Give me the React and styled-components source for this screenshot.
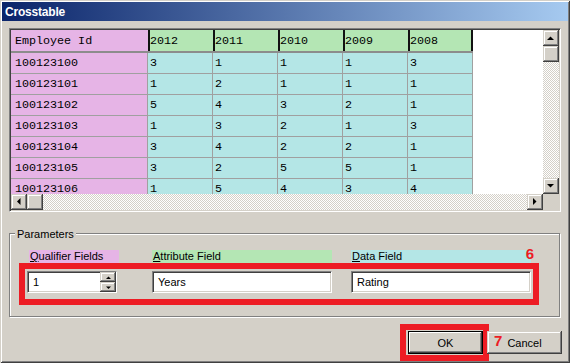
import React from 'react';
import styled, { createGlobalStyle } from 'styled-components';

const YEARS = ['2012', '2011', '2010', '2009', '2008'];

const ROWS = [
  { id: '100123100', values: [3, 1, 1, 1, 3] },
  { id: '100123101', values: [1, 2, 1, 1, 1] },
  { id: '100123102', values: [5, 4, 3, 2, 1] },
  { id: '100123103', values: [1, 3, 2, 1, 3] },
  { id: '100123104', values: [3, 4, 2, 2, 1] },
  { id: '100123105', values: [3, 2, 5, 5, 1] },
  { id: '100123106', values: [1, 5, 4, 3, 4] },
];

const PINK = '#e6b4e6';
const GREEN = '#b4e6b4';
const CYAN = '#b4e6e6';
const FACE = '#d4d0c8';
const RED = '#ed1c24';

const GlobalStyle = createGlobalStyle`
  html, body {
    margin: 0;
    padding: 0;
    background: ${FACE};
  }
  body {
    font-family: 'Liberation Sans', Arial, sans-serif;
    font-size: 11px;
    color: #000;
  }
`;

function Arrow({ dir, size = 16 }) {
  const shapes = {
    up: '4,10 11,10 7.5,6.5',
    down: '4,6 11,6 7.5,9.5',
    left: '9.5,4 9.5,11 6,7.5',
    right: '6,4 6,11 9.5,7.5',
  };
  return (
    <svg width={size} height={size} viewBox="0 0 16 16">
      <polygon points={shapes[dir]} fill="#000" />
    </svg>
  );
}

function SmallArrow({ dir }) {
  const pts = dir === 'up' ? '3,6 8,6 5.5,3.5' : '3,3.5 8,3.5 5.5,6';
  return (
    <svg width="11" height="9" viewBox="0 0 11 9">
      <polygon points={pts} fill="#000" />
    </svg>
  );
}

function App() {
  return (
    <>
      <GlobalStyle />
      <Window>
        <TitleBar>Crosstable</TitleBar>
        <Body>
          <GridFrame>
            <Viewport>
              <HeaderRow>
                <IdHeader>Employee Id</IdHeader>
                {YEARS.map(year => (
                  <YearHeader key={year}>{year}</YearHeader>
                ))}
              </HeaderRow>
              {ROWS.map(row => (
                <DataRow key={row.id}>
                  <IdCell>{row.id}</IdCell>
                  {row.values.map((v, idx) => (
                    <ValueCell key={idx}>{v}</ValueCell>
                  ))}
                </DataRow>
              ))}
            </Viewport>
            <VScroll>
              <ScrollButton>
                <Arrow dir="up" />
              </ScrollButton>
              <ScrollButton />
              <Track />
              <ScrollButton>
                <Arrow dir="down" />
              </ScrollButton>
            </VScroll>
            <HScroll>
              <ScrollButton>
                <Arrow dir="left" />
              </ScrollButton>
              <ScrollButton />
              <Track />
              <ScrollButton>
                <Arrow dir="right" />
              </ScrollButton>
            </HScroll>
            <Corner />
          </GridFrame>

          <Group>
            <Legend>Parameters</Legend>
            <LabelRow>
              <FieldLabel $bg={PINK} $w={90}>
                <u>Q</u>ualifier Fields
              </FieldLabel>
              <FieldLabel $bg={GREEN} $w={180}>
                <u>A</u>ttribute Field
              </FieldLabel>
              <FieldLabel $bg={CYAN} $w={180}>
                <u>D</u>ata Field
                <StepMark $top={-4} $right={-3}>6</StepMark>
              </FieldLabel>
            </LabelRow>
            <RedBox>
              <Field $w={90}>
                1
                <Spinner>
                  <SpinButton>
                    <SmallArrow dir="up" />
                  </SpinButton>
                  <SpinButton>
                    <SmallArrow dir="down" />
                  </SpinButton>
                </Spinner>
              </Field>
              <Field $w={180}>Years</Field>
              <Field $w={180}>Rating</Field>
            </RedBox>
          </Group>

          <ButtonRow>
            <OkWrap>
              <PushButton $default>OK</PushButton>
              <RedFrame />
            </OkWrap>
            <PushButton>
              <StepMark $top={2} $left={7}>7</StepMark>
              Cancel
            </PushButton>
          </ButtonRow>
        </Body>
      </Window>
    </>
  );
}

export default App;

const raised = `
  background: ${FACE};
  box-shadow: inset -1px -1px #404040, inset 1px 1px ${FACE},
    inset -2px -2px #808080, inset 2px 2px #fff;
`;

const Window = styled.div`
  width: 570px;
  height: 363px;
  box-sizing: border-box;
  padding: 2px;
  background: ${FACE};
  box-shadow: inset 1px 1px ${FACE}, inset -1px -1px #404040,
    inset 2px 2px #fff, inset -2px -2px #808080;
  display: flex;
  flex-direction: column;
`;

const TitleBar = styled.div`
  height: 19px;
  display: flex;
  align-items: center;
  padding-left: 3px;
  background: linear-gradient(to right, #0a246a, #a6caf0);
  color: #fff;
  font-weight: bold;
  font-size: 12px;
  letter-spacing: -0.2px;
`;

const Body = styled.div`
  display: flex;
  flex-direction: column;
  padding: 7px 6px 0 7px;
`;

const GridFrame = styled.div`
  width: 552px;
  height: 184px;
  box-sizing: border-box;
  border: 1px solid;
  border-color: #808080 #fff #fff #808080;
  box-shadow: inset 1px 1px #404040, inset -1px -1px ${FACE};
  padding: 1px;
  display: grid;
  grid-template-columns: 532px 16px;
  grid-template-rows: 164px 16px;
`;

const Viewport = styled.div`
  background: #fff;
  overflow: hidden;
  font-family: 'Liberation Mono', 'Courier New', monospace;
  font-size: 11.7px;
`;

const HeaderRow = styled.div`
  display: flex;
  width: 462px;
  height: 23px;
  box-sizing: border-box;
  border-bottom: 2px solid #8c8c8c;
`;

const IdHeader = styled.div`
  width: 137px;
  box-sizing: border-box;
  padding-left: 4px;
  display: flex;
  align-items: center;
  background: ${PINK};
`;

const YearHeader = styled.div`
  width: 65px;
  box-sizing: border-box;
  border-left: 2px solid #111;
  display: flex;
  align-items: center;
  background: ${GREEN};

  &:last-child {
    border-right: 2px solid #111;
  }
`;

const DataRow = styled.div`
  display: flex;
  width: 462px;
  height: 21px;
  box-sizing: border-box;
  border-bottom: 1px solid #a0a0a0;
`;

const IdCell = styled.div`
  width: 137px;
  box-sizing: border-box;
  padding-left: 4px;
  border-right: 1px solid #a0a0a0;
  display: flex;
  align-items: center;
  background: ${PINK};
`;

const ValueCell = styled.div`
  width: 65px;
  box-sizing: border-box;
  padding-left: 2px;
  border-right: 1px solid #a0a0a0;
  display: flex;
  align-items: center;
  background: ${CYAN};
`;

const VScroll = styled.div`
  display: flex;
  flex-direction: column;
`;

const HScroll = styled.div`
  display: flex;
`;

const ScrollButton = styled.div`
  width: 16px;
  height: 16px;
  flex: none;
  display: flex;
  ${raised}
`;

const Track = styled.div`
  flex: 1;
  background: repeating-conic-gradient(${FACE} 0 25%, #fff 0 50%) 0 0 / 2px 2px;
`;

const Corner = styled.div`
  background: ${FACE};
`;

const Group = styled.div`
  position: relative;
  width: 551px;
  height: 84px;
  box-sizing: border-box;
  margin-top: 21px;
  padding-top: 16px;
  border: 1px solid #808080;
  box-shadow: inset 1px 1px #fff, 1px 1px #fff;
`;

const Legend = styled.div`
  position: absolute;
  top: -7px;
  left: 5px;
  padding: 0 2px;
  line-height: 14px;
  background: ${FACE};
`;

const LabelRow = styled.div`
  display: flex;
  gap: 0;
  margin-left: 19px;

  & > :nth-child(2) {
    margin-left: 33px;
  }
  & > :nth-child(3) {
    margin-left: 19px;
  }
`;

const FieldLabel = styled.div`
  position: relative;
  width: ${p => p.$w}px;
  height: 13px;
  line-height: 13px;
  padding-left: 1px;
  box-sizing: border-box;
  background: ${p => p.$bg};
  white-space: nowrap;

  u {
    text-decoration-thickness: 1px;
    text-underline-offset: 1px;
  }
`;

const StepMark = styled.span`
  position: absolute;
  top: ${p => p.$top}px;
  ${p => (p.$right !== undefined ? `right: ${p.$right}px;` : '')}
  ${p => (p.$left !== undefined ? `left: ${p.$left}px;` : '')}
  color: ${RED};
  font-weight: bold;
  font-size: 15px;
  line-height: 15px;
`;

const RedBox = styled.div`
  width: 520px;
  height: 42px;
  box-sizing: border-box;
  margin-left: 9px;
  border: 6px solid ${RED};
  padding: 2px 0 0 2px;
  display: flex;
  align-items: flex-start;

  & > :nth-child(2) {
    margin-left: 35px;
  }
  & > :nth-child(3) {
    margin-left: 19px;
  }
`;

const Field = styled.div`
  width: ${p => p.$w}px;
  height: 22px;
  box-sizing: border-box;
  padding-left: 5px;
  display: flex;
  align-items: center;
  background: #fff;
  border: 1px solid;
  border-color: #808080 #fff #fff #808080;
  box-shadow: inset 1px 1px #404040, inset -1px -1px ${FACE};
`;

const Spinner = styled.div`
  margin-left: auto;
  width: 16px;
  align-self: stretch;
  display: flex;
  flex-direction: column;
`;

const SpinButton = styled.div`
  flex: 1;
  display: flex;
  align-items: center;
  justify-content: center;
  ${raised}
`;

const ButtonRow = styled.div`
  display: flex;
  justify-content: flex-end;
  gap: 4px;
  margin-top: 14px;
`;

const OkWrap = styled.div`
  position: relative;
  display: flex;
`;

const PushButton = styled.div`
  position: relative;
  width: 75px;
  height: 23px;
  box-sizing: border-box;
  display: flex;
  align-items: center;
  justify-content: center;
  ${raised}
  ${p =>
    p.$default
      ? `
    border: 1px solid #000;
    box-shadow: inset -1px -1px #404040, inset 1px 1px #fff,
      inset -2px -2px #808080;
  `
      : ''}
`;

const RedFrame = styled.div`
  position: absolute;
  top: -7px;
  left: -8px;
  right: -6px;
  bottom: -7px;
  border: 6px solid ${RED};
  pointer-events: none;
`;
